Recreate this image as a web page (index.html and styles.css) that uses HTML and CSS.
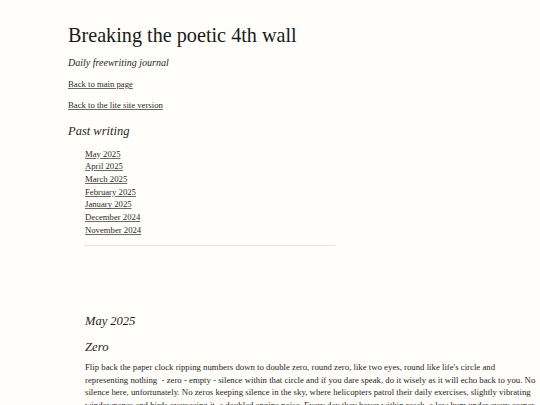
FILE: index.html
```html
<!DOCTYPE html>
<html lang="en">
<head>
<meta charset="utf-8">
<title>Breaking the poetic 4th wall</title>
<link rel="stylesheet" href="styles.css">
</head>
<body>
<div class="site">
  <header class="masthead">
    <h1 class="title">Breaking the poetic 4th wall</h1>
    <p class="subtitle">Daily freewriting journal</p>
    <p class="nav-link"><a href="#">Back to main page</a></p>
    <p class="nav-link nav-link-second"><a href="#">Back to the lite site version</a></p>
  </header>
  <nav class="archive">
    <h2 class="archive-title">Past writing</h2>
    <ul class="archive-list">
      <li><a href="#">May 2025</a></li>
      <li><a href="#">April 2025</a></li>
      <li><a href="#">March 2025</a></li>
      <li><a href="#">February 2025</a></li>
      <li><a href="#">January 2025</a></li>
      <li><a href="#">December 2024</a></li>
      <li><a href="#">November 2024</a></li>
    </ul>
    <hr class="divider">
  </nav>
  <main class="month">
    <h2 class="month-title">May 2025</h2>
    <article class="entry">
      <h3 class="entry-title">Zero</h3>
      <p class="entry-text">Flip back the paper clock ripping numbers down to double zero, round zero, like two eyes, round like life's circle and representing nothing &nbsp;- zero - empty - silence within that circle and if you dare speak, do it wisely as it will echo back to you. No silence here, unfortunately. No zeros keeping silence in the sky, where helicopters patrol their daily exercises, slightly vibrating windowpanes and birds overseeing it, a doubled engine noise. Every day they hover within reach, a low hum under every corner and painting</p>
    </article>
  </main>
</div>
</body>
</html>
```
FILE: styles.css
```css
html, body {
  margin: 0;
  padding: 0;
  background: #fffefa;
}
body {
  font-family: "Liberation Serif", "Times New Roman", serif;
  color: #1f1f1f;
  overflow: hidden;
}
.site {
  padding-left: 68px;
}
a {
  color: #2b2b2b;
  text-decoration: underline;
  text-decoration-color: #6a6a6a;
  text-underline-offset: 1px;
}
.title {
  margin: 23px 0 0;
  font-size: 20.2px;
  line-height: 24px;
  font-weight: normal;
  color: #1a1a1a;
}
.subtitle {
  margin: 9px 0 0;
  font-size: 10px;
  line-height: 14px;
  font-style: italic;
}
.nav-link {
  margin: 8px 0 0;
  font-size: 8.7px;
  line-height: 12px;
}
.nav-link-second {
  margin-top: 9px;
}
.archive-title {
  margin: 12px 0 0;
  font-size: 12.5px;
  line-height: 16px;
  font-style: italic;
  font-weight: normal;
}
.archive-list {
  list-style: none;
  margin: 8.6px 0 0;
  padding-left: 17px;
  font-size: 8.7px;
  line-height: 12.7px;
}
.divider {
  margin: 8px 0 0 16px;
  width: 251px;
  border: 0;
  border-top: 1px solid #e4e4de;
  height: 0;
}
.month {
  padding-left: 17px;
}
.month-title {
  margin: 67px 0 0;
  font-size: 12.5px;
  line-height: 16px;
  font-style: italic;
  font-weight: normal;
}
.entry-title {
  margin: 10px 0 0;
  font-size: 12.7px;
  line-height: 16px;
  font-style: italic;
  font-weight: normal;
}
.entry-text {
  margin: 6.8px 0 0;
  font-size: 8.75px;
  line-height: 12.4px;
  width: 455px;
}
```
